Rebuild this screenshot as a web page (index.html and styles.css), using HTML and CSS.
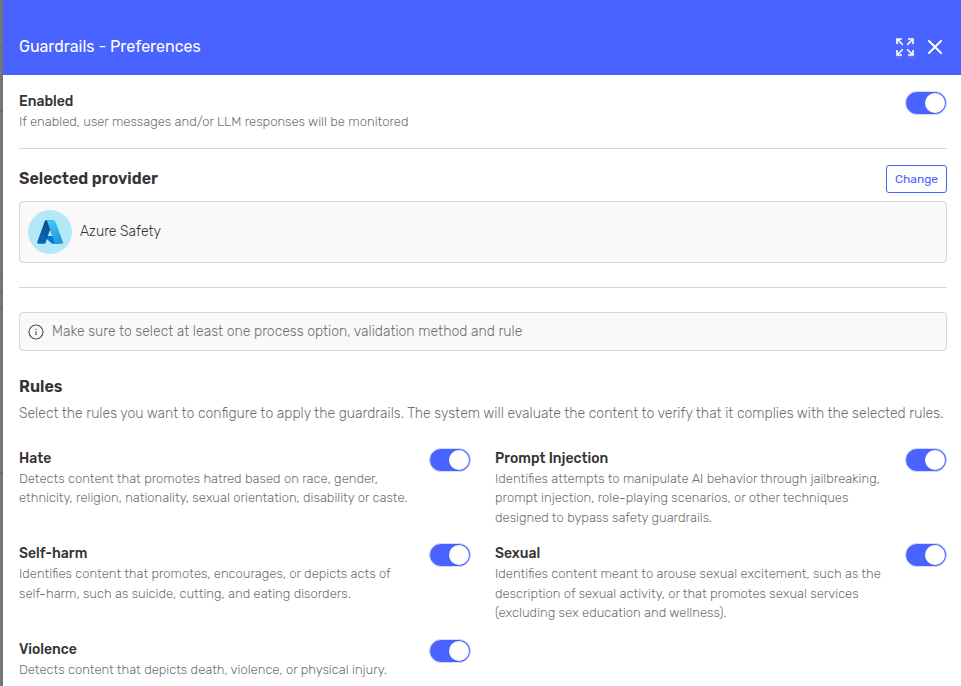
FILE: index.html
```html
<!DOCTYPE html>
<html lang="en">
<head>
    <meta charset="UTF-8">
    <meta name="viewport" content="width=device-width, initial-scale=1.0">
    <title>Guardrails - Preferences</title>
    <link rel="stylesheet" href="styles.css">
</head>
<body>
    <div class="backdrop"></div>
    <div class="drawer">
        <header class="header">
            <h1 class="title">Guardrails - Preferences</h1>
            <button class="icon-btn expand" aria-label="Expand">
                <svg width="18" height="18" viewBox="0 0 18 18" fill="none" stroke="#fff" stroke-width="1.6">
                    <path d="M1 6V1h5M1.3 1.3l5.5 5.5M12 1h5v5M16.7 1.3l-5.5 5.5M1 12v5h5M1.3 16.7l5.5-5.5M12 17h5v-5M16.7 16.7l-5.5-5.5"/>
                </svg>
            </button>
            <button class="icon-btn" aria-label="Close">
                <svg width="14" height="14" viewBox="0 0 14 14" fill="none" stroke="#fff" stroke-width="2" stroke-linecap="round">
                    <path d="M1 1l12 12M13 1L1 13"/>
                </svg>
            </button>
        </header>

        <main class="content">
            <section class="option">
                <div class="option-text">
                    <h3>Enabled</h3>
                    <p>If enabled, user messages and/or LLM responses will be monitored</p>
                </div>
                <button class="switch" role="switch" aria-checked="true" aria-label="Enabled"></button>
            </section>
            <hr class="divider-top">

            <section class="provider">
                <div class="provider-head">
                    <h2>Selected provider</h2>
                    <button class="change">Change</button>
                </div>
                <div class="provider-card">
                    <div class="avatar">
                        <svg width="26" height="24" viewBox="0 0 96 92" preserveAspectRatio="none">
                            <defs>
                                <linearGradient id="left" x1="0.6" y1="0" x2="0.3" y2="1">
                                    <stop offset="0" stop-color="#114a8b"/>
                                    <stop offset="1" stop-color="#0669bc"/>
                                </linearGradient>
                                <linearGradient id="right" x1="0.3" y1="0" x2="0.7" y2="1">
                                    <stop offset="0" stop-color="#3ccbf4"/>
                                    <stop offset="1" stop-color="#2892df"/>
                                </linearGradient>
                            </defs>
                            <path fill="#0078d4" d="M71 60H27a2 2 0 0 0-1.4 3.5l28 26A4.5 4.5 0 0 0 57 91h25z"/>
                            <path fill="url(#left)" d="M33.3 1h27L50 32l6 22-10 10H39L32 87a5 5 0 0 1-4.3 4H4.7a5 5 0 0 1-4.3-6L29 4a4.5 4.5 0 0 1 4.3-3z"/>
                            <path fill="url(#right)" d="M67 4a4.5 4.5 0 0 0-4.3-3H33a4.5 4.5 0 0 1 4.3 3L64 85a4.5 4.5 0 0 1-4.3 6h32a4.5 4.5 0 0 0 4.3-6z"/>
                            <path fill="#b3e9f7" d="M48 37l8 24H40z"/>
                        </svg>
                    </div>
                    <span class="provider-name">Azure Safety</span>
                </div>
            </section>
            <hr class="divider-bottom">

            <div class="notice">
                <svg width="16" height="16" viewBox="0 0 16 16" fill="none" stroke="#555" stroke-width="1.2">
                    <circle cx="8" cy="8" r="7"/>
                    <path d="M8 7.2v4M8 4.7v1.3"/>
                </svg>
                <span>Make sure to select at least one process option, validation method and rule</span>
            </div>

            <section class="rules">
                <h2>Rules</h2>
                <p class="intro">Select the rules you want to configure to apply the guardrails. The system will evaluate the content to verify that it complies with the selected rules.</p>
                <div class="rules-grid">
                    <div class="option">
                        <div class="option-text">
                            <h3>Hate</h3>
                            <p>Detects content that promotes hatred based on race, gender,<br>ethnicity, religion, nationality, sexual orientation, disability or caste.</p>
                        </div>
                        <button class="switch" role="switch" aria-checked="true" aria-label="Hate"></button>
                    </div>
                    <div class="option">
                        <div class="option-text">
                            <h3>Prompt Injection</h3>
                            <p>Identifies attempts to manipulate AI behavior through jailbreaking,<br>prompt injection, role-playing scenarios, or other techniques<br>designed to bypass safety guardrails.</p>
                        </div>
                        <button class="switch" role="switch" aria-checked="true" aria-label="Prompt Injection"></button>
                    </div>
                    <div class="option">
                        <div class="option-text">
                            <h3>Self-harm</h3>
                            <p>Identifies content that promotes, encourages, or depicts acts of<br>self-harm, such as suicide, cutting, and eating disorders.</p>
                        </div>
                        <button class="switch" role="switch" aria-checked="true" aria-label="Self-harm"></button>
                    </div>
                    <div class="option">
                        <div class="option-text">
                            <h3>Sexual</h3>
                            <p>Identifies content meant to arouse sexual excitement, such as the<br>description of sexual activity, or that promotes sexual services<br>(excluding sex education and wellness).</p>
                        </div>
                        <button class="switch" role="switch" aria-checked="true" aria-label="Sexual"></button>
                    </div>
                    <div class="option">
                        <div class="option-text">
                            <h3>Violence</h3>
                            <p>Detects content that depicts death, violence, or physical injury.</p>
                        </div>
                        <button class="switch" role="switch" aria-checked="true" aria-label="Violence"></button>
                    </div>
                </div>
            </section>
        </main>
    </div>
</body>
</html>
```
FILE: styles.css
```css
* {
    box-sizing: border-box;
}
body {
    margin: 0;
    height: 100vh;
    display: flex;
    overflow: hidden;
    font-family: Rubik, Roboto, sans-serif;
    color: #333;
}
/* sliver of the dimmed page left of the drawer, with its row borders */
.backdrop {
    width: 3px;
    background:
        linear-gradient(#666, #666) 0 46px / 3px 1px no-repeat,
        linear-gradient(#666, #666) 0 111px / 3px 1px no-repeat,
        linear-gradient(#666, #666) 0 274px / 3px 1px no-repeat,
        linear-gradient(#666, #666) 0 291px / 3px 1px no-repeat,
        linear-gradient(#666, #666) 0 308px / 3px 1px no-repeat,
        linear-gradient(#666, #666) 0 472px / 3px 1px no-repeat,
        linear-gradient(90deg, #7a7a7a, #707070);
}
.drawer {
    flex: 1;
    background: #fff;
}
h1, h2, h3, p {
    margin: 0;
    white-space: nowrap;
}
button {
    font-family: inherit;
    padding: 0;
    cursor: pointer;
}
.header {
    height: 75px;
    padding: 19px 19px 0 16px;
    display: flex;
    align-items: center;
    background: #4863ff;
    color: #fff;
}
.title {
    flex: 1;
    padding-bottom: 2px;
    font-size: 16px;
    font-weight: 400;
}
.icon-btn {
    display: flex;
    border: none;
    background: none;
}
.expand {
    margin-right: 14px;
    filter: drop-shadow(0 2px 1px rgba(255, 255, 255, 0.15));
}
.content {
    padding: 16px 14px 0 16px;
}
.option {
    display: flex;
    justify-content: space-between;
    align-items: flex-start;
}
h3 {
    font-size: 14px;
    font-weight: 500;
    line-height: 21px;
}
.option-text p {
    font-size: 13px;
    font-weight: 300;
    line-height: 19.5px;
    color: #707070;
}
.switch {
    width: 42px;
    height: 24px;
    display: flex;
    justify-content: flex-end;
    align-items: center;
    border: 1px solid #d5dbff;
    border-radius: 12px;
    background: #4863ff;
}
.switch::after {
    content: "";
    width: 20px;
    height: 20px;
    margin-right: 1px;
    border-radius: 50%;
    background: #fff;
}
hr {
    height: 1px;
    border: none;
    background: #d6d6d6;
}
.divider-top {
    margin: 16.5px 0 16px;
}
.divider-bottom {
    margin: 24px 0;
}
h2 {
    font-size: 16px;
    font-weight: 600;
    line-height: 24px;
}
.provider-head {
    height: 28px;
    margin-bottom: 8px;
    display: flex;
    justify-content: space-between;
    align-items: center;
}
.change {
    width: 61px;
    height: 28px;
    border: 1px solid #4863ff;
    border-radius: 3px;
    background: #fff;
    color: #4863ff;
    font-size: 12px;
}
.provider-card {
    height: 62px;
    padding: 0 8px;
    display: flex;
    align-items: center;
    gap: 8px;
    border: 1px solid #d6d6d6;
    border-radius: 4px;
    background: #f9f9f9;
}
.avatar {
    width: 44px;
    height: 44px;
    display: flex;
    align-items: center;
    justify-content: center;
    border-radius: 50%;
    background: #b3e9f7;
}
.provider-name {
    padding-bottom: 2px;
    font-size: 14px;
    font-weight: 300;
}
.notice {
    height: 39px;
    padding: 0 8px;
    display: flex;
    align-items: center;
    gap: 8px;
    border: 1px solid #d6d6d6;
    border-radius: 4px;
    background: #f9f9f9;
    color: #707070;
    font-size: 14px;
    font-weight: 300;
    white-space: nowrap;
}
.rules {
    padding-top: 24px;
}
.intro {
    margin: 4px 0 23.5px;
    font-size: 14px;
    font-weight: 300;
    line-height: 21px;
    color: #707070;
}
.rules-grid {
    display: grid;
    grid-template-columns: 1fr 1fr;
    gap: 16px 24px;
}
```
